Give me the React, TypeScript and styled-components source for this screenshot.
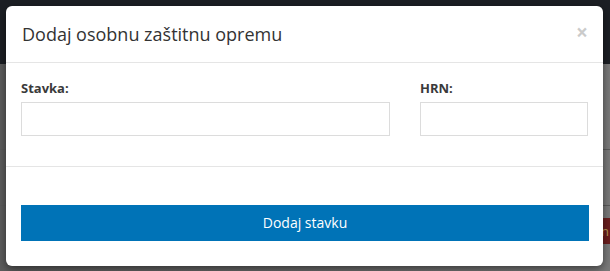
import React from "react";
import styled, { createGlobalStyle } from "styled-components";

const GlobalStyle = createGlobalStyle`
  html, body {
    margin: 0;
    padding: 0;
  }
  body {
    font-family: "Open Sans", "Liberation Sans", sans-serif;
    font-size: 14px;
    color: #333;
  }
  * {
    box-sizing: border-box;
  }
`;

const App = () => {
  return (
    <>
      <GlobalStyle />
      <Page>
        <TopBar />
        <Content>
          <Row />
          <Row />
          <DangerButton>n</DangerButton>
        </Content>
        <Modal>
          <ModalHeader>
            <ModalTitle>Dodaj osobnu zaštitnu opremu</ModalTitle>
            <CloseButton aria-label="Zatvori">×</CloseButton>
          </ModalHeader>
          <ModalBody>
            <FormGrid>
              <FormGroup>
                <Label>Stavka:</Label>
                <Input type="text" />
              </FormGroup>
              <FormGroup>
                <Label>HRN:</Label>
                <Input type="text" />
              </FormGroup>
            </FormGrid>
          </ModalBody>
          <ModalFooter>
            <PrimaryButton>Dodaj stavku</PrimaryButton>
          </ModalFooter>
        </Modal>
      </Page>
    </>
  );
};

export default App;

const Page = styled.div`
  position: relative;
  width: 610px;
  height: 271px;
  overflow: hidden;
  background: #646464;
  display: flex;
  flex-direction: column;
`;

const TopBar = styled.div`
  height: 64px;
  background: #1c1f24;
  flex-shrink: 0;
`;

const Content = styled.div`
  flex: 1;
  display: flex;
  flex-direction: column;
  align-items: flex-end;
  padding-top: 30px;
  background: linear-gradient(90deg, #5c5c5c 0%, #6a6a6a 50%, #7a7a7a 100%);
`;

const Row = styled.div`
  width: 100%;
  height: 56px;
  border-bottom: 1px solid #5a5a5a;
`;

const DangerButton = styled.div`
  margin-top: 12px;
  width: 24px;
  height: 26px;
  margin-right: -10px;
  background: #6b1e1e;
  color: #b99a55;
  font-size: 13px;
  line-height: 26px;
  padding-left: 5px;
`;

const Modal = styled.div`
  position: absolute;
  left: 6px;
  top: 6px;
  width: 597px;
  height: 260px;
  background: #fff;
  border-radius: 6px;
  box-shadow: 0 3px 9px rgba(0, 0, 0, 0.5);
  display: flex;
  flex-direction: column;
`;

const ModalHeader = styled.div`
  display: flex;
  align-items: center;
  justify-content: space-between;
  height: 57px;
  padding: 0 15px 0 16px;
  border-bottom: 1px solid #e5e5e5;
`;

const ModalTitle = styled.h4`
  margin: 0;
  font-size: 18px;
  font-weight: 400;
  line-height: 26px;
  color: #333;
`;

const CloseButton = styled.button`
  border: 0;
  background: transparent;
  padding: 0;
  margin-top: -4px;
  font-family: "Open Sans", "Liberation Sans", sans-serif;
  font-size: 21px;
  font-weight: 700;
  line-height: 1;
  color: #000;
  opacity: 0.2;
`;

const ModalBody = styled.div`
  padding: 15px 15px 0 15px;
  border-bottom: 1px solid #e5e5e5;
`;

const FormGrid = styled.div`
  display: grid;
  grid-template-columns: 369px 1fr;
  column-gap: 30px;
`;

const FormGroup = styled.div`
  display: flex;
  flex-direction: column;
  margin-bottom: 30px;
`;

const Label = styled.label`
  font-size: 13px;
  font-weight: 700;
  line-height: 20px;
  color: #3a3a3a;
  margin-bottom: 4px;
`;

const Input = styled.input`
  height: 34px;
  width: 100%;
  border: 1px solid #dcdcdc;
  border-radius: 0;
  padding: 6px 12px;
  font-size: 14px;
  outline: none;
`;

const ModalFooter = styled.div`
  padding: 38px 14px 0 15px;
`;

const PrimaryButton = styled.button`
  display: block;
  width: 100%;
  height: 36px;
  border: 0;
  border-radius: 0;
  background: #0073b7;
  color: #fff;
  font-family: "Open Sans", "Liberation Sans", sans-serif;
  font-size: 14px;
  line-height: 20px;
`;
